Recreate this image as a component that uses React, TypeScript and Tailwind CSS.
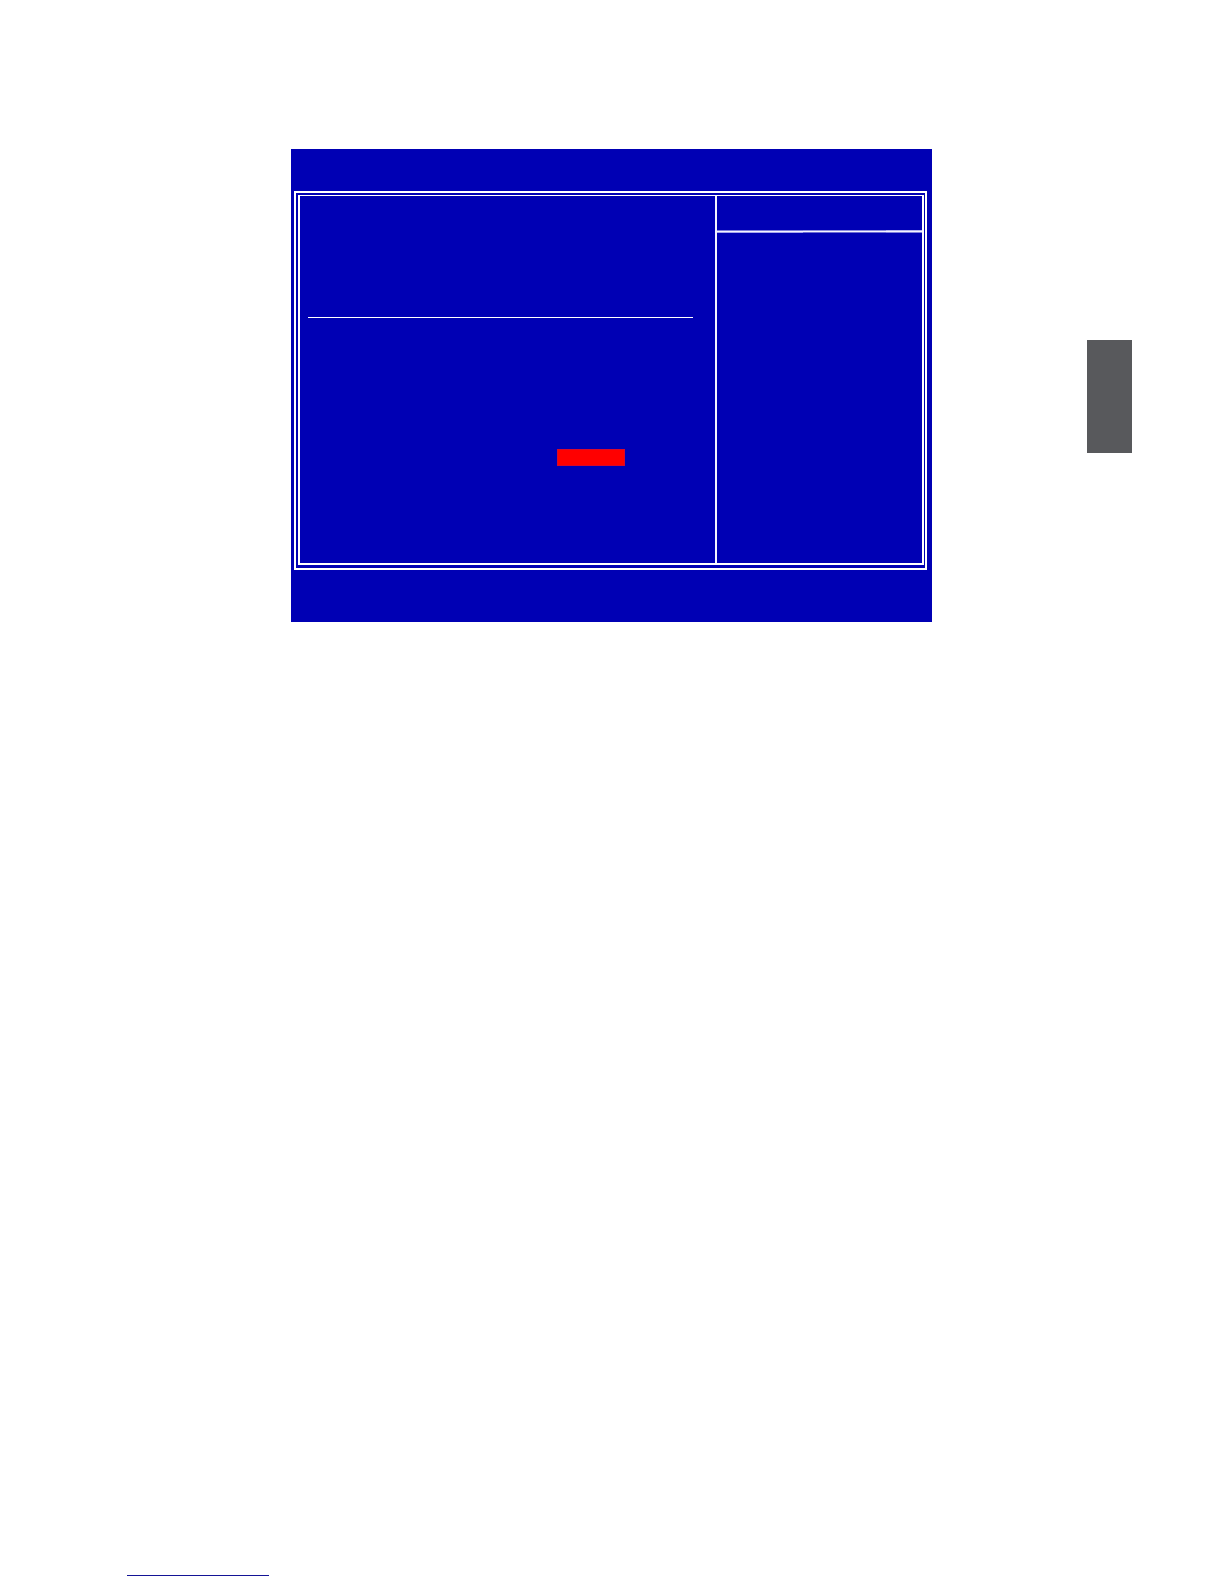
function HelpRule() {
  return (
    <div className="flex h-[3px]">
      <div className="w-[86px] border-t border-b border-t-[#7c7cdc] border-b-[#a4a4ee] bg-[#f4f4ff]" />
      <div className="flex-1 border-t border-b border-t-[#8c8ce0] border-b-[#6c6cd4] bg-[#f4f4ff]" />
      <div className="w-9 border-t border-b border-t-[#b4b4f0] border-b-[#8080dc] bg-[#f4f4ff]" />
    </div>
  );
}

function SetupScreen() {
  return (
    <main
      aria-label="BIOS setup"
      className="min-w-0 flex-1 bg-[#0000b4] pt-[42px] pr-[5px] pb-[52px] pl-[3px]"
    >
      <div className="border-2 border-white px-[2px] pt-0.5 pb-[3px] pr-px">
        <div className="flex min-h-[370px] border-2 border-t border-white">
          <section
            aria-label="Settings"
            className="min-w-0 flex-1 border-r-2 border-[#f4f4ff] pr-[22px] pl-2"
          >
            <hr className="mt-[121px] border-t border-white" />
            <div className="mt-[131px] flex justify-end pr-[68px]">
              <div className="h-[17px] w-[68px] border border-[#d8082c] bg-[#ff0000]" />
            </div>
          </section>
          <aside aria-label="Item help" className="w-[205px] pt-[34px]">
            <HelpRule />
          </aside>
        </div>
      </div>
    </main>
  );
}

export default function App() {
  return (
    <div className="flex min-h-screen flex-col bg-white font-['Liberation_Sans',sans-serif]">
      <div className="flex items-start gap-[155px] pt-[149px] pr-[92px] pl-[291px]">
        <SetupScreen />
        <div className="mt-[191px] h-[113px] w-[45px] bg-[#58595c]" />
      </div>
      <footer className="mt-auto pb-2 pl-[127px]">
        <a
          href="#top"
          aria-label="Back to top"
          className="block h-4 w-[142px] border-b border-b-[#141496]"
        />
      </footer>
    </div>
  );
}
